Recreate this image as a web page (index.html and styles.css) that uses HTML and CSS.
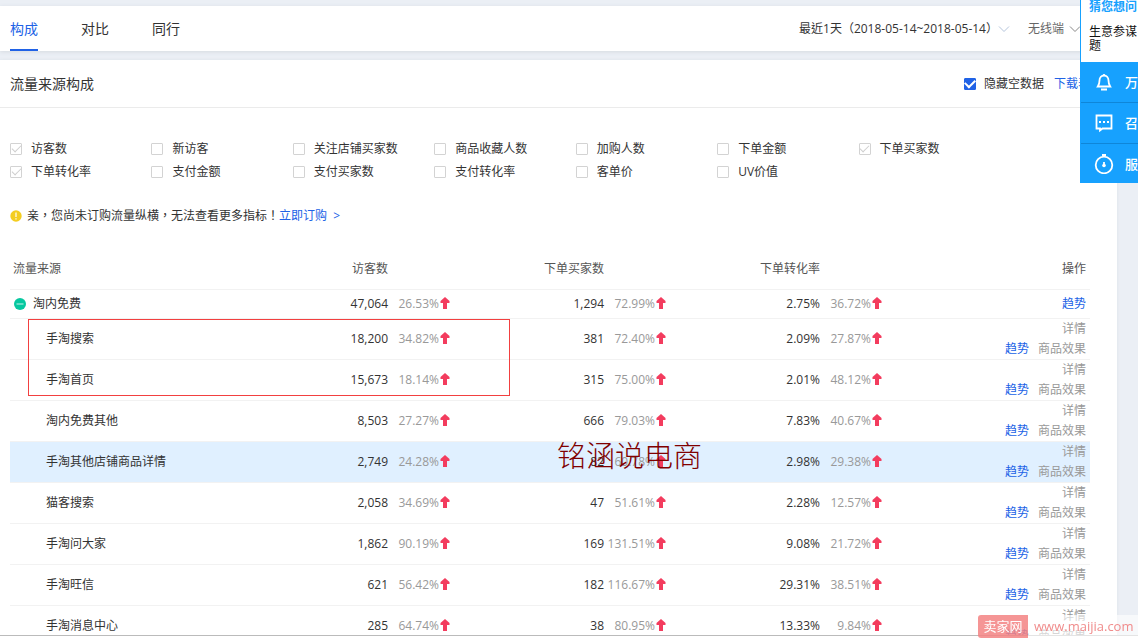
FILE: index.html
```html
<!DOCTYPE html>
<html lang="zh-CN">
<head>
<meta charset="utf-8">
<title>流量来源构成</title>
<link rel="stylesheet" href="styles.css">
</head>
<body>
<svg class="defs" aria-hidden="true">
  <symbol id="up" viewBox="0 0 10 12"><path d="M5 0 .5 4v2H3v6h4V6h2.500V4z" fill="#f33c5e"/></symbol>
  <symbol id="chev" viewBox="0 0 12 8"><path d="M1 1.500 6 6.500l5-5" fill="none" stroke="currentColor"/></symbol>
</svg>
<div class="screen">
  <div class="content">
    <header class="topbar">
      <nav class="tabs">
        <a class="tab active" href="#">构成</a>
        <a class="tab" href="#">对比</a>
        <a class="tab" href="#">同行</a>
      </nav>
      <div class="filters">
        <button class="picker"><span class="tc" lang="zh-TW">最近1天（2018-05-14~2018-05-14）</span><svg class="chev light"><use href="#chev"/></svg></button>
        <button class="picker device">无线端<svg class="chev"><use href="#chev"/></svg></button>
      </div>
    </header>
    <main class="panel">
      <div class="panel-head">
        <h1>流量来源构成</h1>
        <div class="panel-tools">
          <label class="check"><input class="blue" type="checkbox" checked>隐藏空数据</label>
          <a href="#">下载表</a>
        </div>
      </div>
      <div class="metrics">
        <label class="check"><input type="checkbox" checked>访客数</label>
        <label class="check"><input type="checkbox">新访客</label>
        <label class="check"><input type="checkbox">关注店铺买家数</label>
        <label class="check"><input type="checkbox">商品收藏人数</label>
        <label class="check"><input type="checkbox">加购人数</label>
        <label class="check"><input type="checkbox">下单金额</label>
        <label class="check"><input type="checkbox" checked>下单买家数</label>
        <label class="check"><input type="checkbox" checked>下单转化率</label>
        <label class="check"><input type="checkbox">支付金额</label>
        <label class="check"><input type="checkbox">支付买家数</label>
        <label class="check"><input type="checkbox">支付转化率</label>
        <label class="check"><input type="checkbox">客单价</label>
        <label class="check"><input type="checkbox">UV价值</label>
      </div>
      <p class="notice">
        <svg class="warn" viewBox="0 0 12 12"><circle cx="6" cy="6" r="5.700" fill="#f4cd20"/><path d="M6 2.500v4.500M6 8.300v1.300" stroke="#fff" stroke-width="1.200"/></svg>
        <span><span class="tc" lang="zh-TW">亲，您尚未订购流量纵横，无法查看更多指标！</span><a href="#">立即订购 &nbsp;&gt;</a></span>
      </p>
      <div class="table-wrap">
        <table>
          <colgroup><col><col class="c-metric"><col class="c-metric"><col class="c-metric"><col class="c-ops"></colgroup>
          <thead>
            <tr><th class="name">流量来源</th><th class="metric">访客数</th><th class="metric">下单买家数</th><th class="metric">下单转化率</th><th class="ops">操作</th></tr>
          </thead>
          <tbody>
            <tr class="parent">
              <td class="name"><button class="toggle" aria-label="收起"><svg viewBox="0 0 12 12"><circle cx="6" cy="6" r="6" fill="#06c8a0"/><path d="M2.500 6h7" stroke="#fff" stroke-opacity=".8"/></svg></button>淘内免费</td>
              <td>47,064<span class="pct">26.53%<svg><use href="#up"/></svg></span></td>
              <td>1,294<span class="pct">72.99%<svg><use href="#up"/></svg></span></td>
              <td>2.75%<span class="pct">36.72%<svg><use href="#up"/></svg></span></td>
              <td class="ops"><a href="#">趋势</a></td>
            </tr>
            <tr>
              <td class="name">手淘搜索</td>
              <td>18,200<span class="pct">34.82%<svg><use href="#up"/></svg></span></td>
              <td>381<span class="pct">72.40%<svg><use href="#up"/></svg></span></td>
              <td>2.09%<span class="pct">27.87%<svg><use href="#up"/></svg></span></td>
              <td class="ops"><a class="muted" href="#">详情</a><br><a href="#">趋势</a><a class="muted gap" href="#">商品效果</a></td>
            </tr>
            <tr>
              <td class="name">手淘首页</td>
              <td>15,673<span class="pct">18.14%<svg><use href="#up"/></svg></span></td>
              <td>315<span class="pct">75.00%<svg><use href="#up"/></svg></span></td>
              <td>2.01%<span class="pct">48.12%<svg><use href="#up"/></svg></span></td>
              <td class="ops"><a class="muted" href="#">详情</a><br><a href="#">趋势</a><a class="muted gap" href="#">商品效果</a></td>
            </tr>
            <tr>
              <td class="name">淘内免费其他</td>
              <td>8,503<span class="pct">27.27%<svg><use href="#up"/></svg></span></td>
              <td>666<span class="pct">79.03%<svg><use href="#up"/></svg></span></td>
              <td>7.83%<span class="pct">40.67%<svg><use href="#up"/></svg></span></td>
              <td class="ops"><a class="muted" href="#">详情</a><br><a href="#">趋势</a><a class="muted gap" href="#">商品效果</a></td>
            </tr>
            <tr class="hover">
              <td class="name">手淘其他店铺商品详情</td>
              <td>2,749<span class="pct">24.28%<svg><use href="#up"/></svg></span></td>
              <td>82<span class="pct">60.78%<svg><use href="#up"/></svg></span></td>
              <td>2.98%<span class="pct">29.38%<svg><use href="#up"/></svg></span></td>
              <td class="ops"><a class="muted" href="#">详情</a><br><a href="#">趋势</a><a class="muted gap" href="#">商品效果</a></td>
            </tr>
            <tr>
              <td class="name">猫客搜索</td>
              <td>2,058<span class="pct">34.69%<svg><use href="#up"/></svg></span></td>
              <td>47<span class="pct">51.61%<svg><use href="#up"/></svg></span></td>
              <td>2.28%<span class="pct">12.57%<svg><use href="#up"/></svg></span></td>
              <td class="ops"><a class="muted" href="#">详情</a><br><a href="#">趋势</a><a class="muted gap" href="#">商品效果</a></td>
            </tr>
            <tr>
              <td class="name">手淘问大家</td>
              <td>1,862<span class="pct">90.19%<svg><use href="#up"/></svg></span></td>
              <td>169<span class="pct">131.51%<svg><use href="#up"/></svg></span></td>
              <td>9.08%<span class="pct">21.72%<svg><use href="#up"/></svg></span></td>
              <td class="ops"><a class="muted" href="#">详情</a><br><a href="#">趋势</a><a class="muted gap" href="#">商品效果</a></td>
            </tr>
            <tr>
              <td class="name">手淘旺信</td>
              <td>621<span class="pct">56.42%<svg><use href="#up"/></svg></span></td>
              <td>182<span class="pct">116.67%<svg><use href="#up"/></svg></span></td>
              <td>29.31%<span class="pct">38.51%<svg><use href="#up"/></svg></span></td>
              <td class="ops"><a class="muted" href="#">详情</a><br><a href="#">趋势</a><a class="muted gap" href="#">商品效果</a></td>
            </tr>
            <tr>
              <td class="name">手淘消息中心</td>
              <td>285<span class="pct">64.74%<svg><use href="#up"/></svg></span></td>
              <td>38<span class="pct">80.95%<svg><use href="#up"/></svg></span></td>
              <td>13.33%<span class="pct">9.84%<svg><use href="#up"/></svg></span></td>
              <td class="ops"><a class="muted" href="#">详情</a><br><a href="#">趋势</a><a class="muted gap" href="#">商品效果</a></td>
            </tr>
          </tbody>
        </table>
        <div class="highlight"></div>
        <div class="signature">铭涵说电商</div>
      </div>
    </main>
  </div>
  <div class="edge"></div>
</div>

<aside class="assistant">
  <div class="ask">
    <h2>猜您想问</h2>
    <a href="#">生意参谋<br>题</a>
  </div>
  <button><svg viewBox="0 0 20 20"><path d="M3.800 14.500C5.500 12 5.500 10 5.500 8.500c0-3 2-5 4.500-5s4.500 2 4.500 5c0 1.500 0 3.500 1.700 6z M10 3.500V2 M7 17.500h6"/></svg>万象</button>
  <button><svg viewBox="0 0 20 20"><path d="M2.500 2.500h15v13h-9l-2.500 2v-2h-3.500z"/><path class="dots" d="M5 9h2M9 9h2M13 9h2"/></svg>召唤</button>
  <button><svg viewBox="0 0 20 20"><circle cx="10" cy="11" r="8.300"/><path d="M8 1h4M10 1v2M10 8v4"/><circle class="dot" cx="10" cy="11.500" r="1.800"/></svg>服务</button>
</aside>

<div class="watermark"><span class="brand">卖家网</span><span class="site">www.maijia.com</span></div>
</body>
</html>
```
FILE: styles.css
```css
* { box-sizing: border-box; }

body {
  margin: 0;
  font: 12px/20px "Open Sans", "Noto Sans CJK SC", sans-serif;
  color: #333;
  background: #ebeff5;
}

a { color: #2062e6; text-decoration: none; }
button {
  border: 0;
  padding: 0;
  background: none;
  font: inherit;
  color: inherit;
}

.defs { display: block; width: 0; height: 0; }

.screen {
  display: flex;
  flex-direction: column;
  height: 100vh;
  overflow: hidden;
}
.content {
  flex: 1;
  min-height: 0;
  overflow: hidden;
  padding: 6px 21px 0 0;
}
.edge {
  flex: none;
  height: 3px;
  border-top: 1px solid #bbb;
  background: #fff;
}

.topbar {
  display: flex;
  justify-content: space-between;
  padding: 0 36px 0 10px;
  background: #fff;
  box-shadow: 0 1px 4px #d5dae0;
}
.tabs { display: flex; gap: 43px; }
.tab {
  height: 45px;
  line-height: 46px;
  font-size: 14px;
  color: #333;
}
.tab.active { color: #2062e6; border-bottom: 2px solid #2062e6; }
.filters { display: flex; align-items: center; gap: 18px; }
.picker { display: flex; align-items: center; }
.device { gap: 5px; color: #666; }
.chev { width: 12px; height: 8px; color: #888; }
.chev.light { color: #b5c5dc; }

.panel {
  margin-top: 9px;
  background: #fff;
  box-shadow: 0 0 3px #dde2e8;
}
.panel-head {
  display: flex;
  justify-content: space-between;
  align-items: center;
  height: 48px;
  padding: 0 27px 0 10px;
  border-bottom: 1px solid #ebebeb;
}
.panel-head h1 { margin: 0; font-size: 14px; font-weight: 400; }
.panel-tools { display: flex; gap: 10px; }

.check { display: flex; align-items: center; gap: 9px; line-height: 23px; }
.panel-tools .check { gap: 8px; line-height: 20px; }
.check input {
  appearance: none;
  flex: none;
  display: grid;
  place-items: center;
  width: 12px;
  height: 12px;
  margin: 0;
  border: 1px solid #d3d3d3;
  border-radius: 1px;
  background: #fff;
}
.check input:checked::before {
  content: "";
  width: 8px;
  height: 4px;
  margin-bottom: 3px;
  border: solid #cfcfcf;
  border-width: 0 0 1px 1px;
  rotate: -45deg;
}
.check input.blue { border-color: #2062e6; background: #2062e6; }
.check input.blue:checked::before { border-color: #fff; border-width: 0 0 2px 2px; height: 5px; }

.metrics {
  display: grid;
  grid-template-columns: repeat(7, 1fr);
  padding: 29px 117px 0 10px;
}

.notice {
  display: flex;
  align-items: center;
  gap: 5px;
  margin: 23px 0 0;
  padding-left: 10px;
}
.warn { width: 12px; height: 12px; }
.tc { font-family: "Open Sans", "Noto Sans CJK TC", sans-serif; }

.table-wrap { position: relative; padding: 22px 27px 0 10px; }
table { width: 100%; table-layout: fixed; border-collapse: collapse; }
.c-metric { width: 20%; }
.c-ops { width: 208px; }
th, td {
  height: 41px;
  padding: 0;
  border-bottom: 1px solid #f2f2f2;
  font-weight: 400;
  text-align: right;
  white-space: nowrap;
}
th { padding-top: 2px; color: #555; }
th.metric { padding-right: 62px; }
th.name { padding-left: 3px; text-align: left; }
td.name { padding-left: 36px; text-align: left; }
.parent td { height: 29px; }
.parent td.name { padding-left: 4px; }
.ops { padding-right: 4px; }
.hover td { background: #e0f0ff; }
.toggle { width: 12px; height: 12px; margin-right: 7px; vertical-align: -2px; }
.toggle svg { display: block; }
.pct { display: inline-block; width: 62px; color: #999; }
.pct svg { width: 10px; height: 12px; margin-left: 1px; vertical-align: -1px; }
.muted { color: #999; }
.gap { margin-left: 9px; }

.highlight {
  position: absolute;
  top: 93px;
  left: 28px;
  width: 482px;
  height: 77px;
  border: 1px solid #f24040;
}
.signature {
  position: absolute;
  top: 208px;
  left: 557px;
  font: 300 29px/40px "Noto Sans CJK SC", sans-serif;
  color: #800000;
}

.assistant {
  position: fixed;
  top: 0;
  right: 0;
  width: 58px;
  overflow: hidden;
  border-left: 1px solid #17a1fe;
  background: #17a1fe;
}
.ask {
  height: 62px;
  padding-left: 8px;
  background: #fff;
  white-space: nowrap;
}
.ask h2 {
  margin: 0;
  font-size: 12px;
  line-height: 14px;
  color: #17a1fe;
}
.ask a { display: block; margin-top: 11px; line-height: 14px; color: #111; }
.assistant button {
  display: flex;
  align-items: center;
  gap: 11px;
  width: 100%;
  height: 41px;
  padding-left: 13px;
  border-bottom: 1px solid #0f86d8;
  font-size: 13px;
  font-weight: 500;
  color: #fff;
  white-space: nowrap;
}
.assistant button:last-child { height: 39px; border-bottom: 0; }
.assistant svg {
  flex: none;
  width: 20px;
  height: 20px;
  fill: none;
  stroke: #fff;
  stroke-width: 1.8;
}
.assistant .dot { fill: #fff; stroke: none; }
.assistant .dots { stroke-width: 2; }

.watermark {
  position: fixed;
  right: 0;
  bottom: 0;
  display: flex;
  width: 160px;
  font-size: 13px;
  line-height: 23px;
}
.brand {
  flex: none;
  width: 50px;
  border-radius: 3px 0 0 3px;
  background: rgba(243, 130, 130, .85);
  color: #fff;
  text-align: center;
}
.site {
  flex: 1;
  padding-left: 6px;
  background: rgba(255, 255, 255, .6);
  color: #f08c8c;
}
```
